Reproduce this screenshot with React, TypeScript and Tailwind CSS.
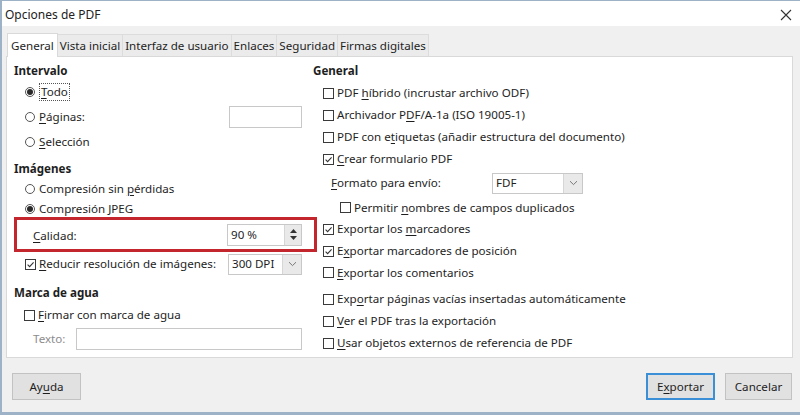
import React from "react";

const U = ({ children }: { children: React.ReactNode }) => (
  <span className="underline underline-offset-[2px] decoration-[1px]">{children}</span>
);

function Check({ checked = false }: { checked?: boolean }) {
  return (
    <span className="w-[11px] h-[11px] border border-[#3a3a3a] bg-white flex items-center justify-center shrink-0 mr-[3px]">
      {checked && (
        <svg width="9" height="9" viewBox="0 0 9 9">
          <path d="M1.6 4.6L3.6 6.6L7.6 2.3" fill="none" stroke="#333" strokeWidth="1.1" />
        </svg>
      )}
    </span>
  );
}

function Radio({ on = false }: { on?: boolean }) {
  return (
    <span className="w-[10px] h-[10px] rounded-full border border-[#555] bg-white flex items-center justify-center shrink-0 mr-[4px]">
      {on && <span className="w-[6px] h-[6px] rounded-full bg-[#2a2a2a]" />}
    </span>
  );
}

function Chevron() {
  return (
    <svg width="9" height="6" viewBox="0 0 9 6">
      <path d="M1 1.2L4.5 4.6L8 1.2" fill="none" stroke="#777" strokeWidth="1" />
    </svg>
  );
}

function Select({ value, w, h }: { value: string; w: string; h: string }) {
  return (
    <div className={`${w} ${h} border border-[#c8c8c8] bg-white flex`}>
      <div className="flex-1 flex items-center pl-[3px]">{value}</div>
      <div className="w-[19px] bg-[#e9e9e9] border-l border-[#d6d6d6] flex items-center justify-center">
        <Chevron />
      </div>
    </div>
  );
}

const tabs = ["General", "Vista inicial", "Interfaz de usuario", "Enlaces", "Seguridad", "Firmas digitales"];

export default function App() {
  return (
    <div className="w-[800px] h-[415px] bg-[#f0f0f0] border-l-2 border-t border-b-[3px] border-[#9db2c6] font-['Noto_Sans',sans-serif] text-[11.6px] text-[#1e1e1e] flex flex-col overflow-hidden leading-none">
      {/* Title bar */}
      <div className="h-[25px] bg-white flex items-center justify-between pl-[3px] pr-[8px] pt-[2px]">
        <span className="text-[12px] text-[#222]">Opciones de PDF</span>
        <svg width="12" height="12" viewBox="0 0 12 12" className="mt-[1px]">
          <path d="M1 1L11 11M11 1L1 11" stroke="#333" strokeWidth="1.1" />
        </svg>
      </div>

      {/* Tabs */}
      <div className="flex pl-[5px] mt-[6px] h-[24px] items-end">
        {tabs.map((t, i) => (
          <div
            key={t}
            className={
              i === 0
                ? "h-[24px] px-[3px] flex items-center bg-white border-t border-l border-r border-[#d9d9d9] relative z-10 -mb-px"
                : "h-[22px] px-[2px] flex items-center bg-[#ebebeb] border-t border-r border-[#dcdcdc]"
            }
          >
            {t}
          </div>
        ))}
      </div>

      {/* Panel */}
      <div className="ml-[4px] mr-[7px] h-[302px] bg-white border border-[#d9d9d9] flex">
        {/* Left column */}
        <div className="w-[303px] pl-[7px] pr-[8px] pt-[5px] flex flex-col">
          <div className="h-[18px] flex items-center font-bold">Intervalo</div>
          <div className="mt-[1px] h-[22px] flex items-center pl-[11px]">
            <Radio on />
            <span className="border border-dotted border-[#555] px-[1px] py-[2px]">
              <U>T</U>odo
            </span>
          </div>
          <div className="mt-[3px] h-[22px] flex items-center pl-[11px]">
            <Radio />
            <span className="flex-1">
              <U>P</U>áginas:
            </span>
            <div className="w-[73px] h-[22px] border border-[#c8c8c8] bg-white" />
          </div>
          <div className="mt-[3px] h-[22px] flex items-center pl-[11px]">
            <Radio />
            <span>
              <U>S</U>elección
            </span>
          </div>
          <div className="mt-[6px] h-[19px] flex items-center font-bold">Imágenes</div>
          <div className="h-[22px] flex items-center pl-[11px]">
            <Radio />
            <span>
              Compresión sin <U>p</U>érdidas
            </span>
          </div>
          <div className="h-[17px] flex items-center pl-[11px]">
            <Radio on />
            <span>Compresión JPEG</span>
          </div>
          <div className="h-[35px] w-[303px] border-[3px] border-[#c4262e] flex items-center pl-[16px] pr-[12px]">
            <span className="flex-1 pt-[2px]">
              <U>C</U>alidad:
            </span>
            <div className="w-[75px] h-[22px] border border-[#c8c8c8] bg-white flex">
              <div className="flex-1 flex items-center pl-[3px]">90 %</div>
              <div className="w-[17px] bg-[#e9e9e9] border-l border-[#d6d6d6] flex flex-col items-center justify-center gap-[3px]">
                <svg width="7" height="4" viewBox="0 0 7 4">
                  <path d="M0 4L3.5 0L7 4Z" fill="#333" />
                </svg>
                <svg width="7" height="4" viewBox="0 0 7 4">
                  <path d="M0 0L3.5 4L7 0Z" fill="#333" />
                </svg>
              </div>
            </div>
          </div>
          <div className="mt-[1px] h-[22px] flex items-center pl-[11px]">
            <Check checked />
            <span className="flex-1">
              <U>R</U>educir resolución de imágenes:
            </span>
            <Select value="300 DPI" w="w-[74px]" h="h-[21px]" />
          </div>
          <div className="mt-[9px] h-[18px] flex items-center font-bold">Marca de agua</div>
          <div className="mt-[2px] h-[22px] flex items-center pl-[10px]">
            <Check />
            <span>
              <U>F</U>irmar con marca de agua
            </span>
          </div>
          <div className="mt-[2px] h-[22px] flex items-center pl-[19px]">
            <span className="flex-1 text-[#8c8c8c]">Texto:</span>
            <div className="w-[226px] h-[22px] border border-[#c8c8c8] bg-white" />
          </div>
        </div>

        {/* Right column */}
        <div className="flex-1 pl-[3px] pt-[5px] flex flex-col">
          <div className="h-[18px] flex items-center font-bold">General</div>
          <div className="pl-[10px] flex flex-col">
            <div className="mt-[2px] h-[22px] flex items-center">
              <Check />
              <span>
                PDF <U>h</U>íbrido (incrustar archivo ODF)
              </span>
            </div>
            <div className="h-[22px] flex items-center">
              <Check />
              <span>
                Archivador P<U>D</U>F/A-1a (ISO 19005-1)
              </span>
            </div>
            <div className="h-[22px] flex items-center">
              <Check />
              <span>
                PDF con e<U>t</U>iquetas (añadir estructura del documento)
              </span>
            </div>
            <div className="h-[22px] flex items-center">
              <Check checked />
              <span>
                <U>C</U>rear formulario PDF
              </span>
            </div>
            <div className="mt-[2px] h-[22px] flex items-center pl-[8px]">
              <span className="w-[161px]">
                <U>F</U>ormato para envío:
              </span>
              <Select value="FDF" w="w-[91px]" h="h-[21px]" />
            </div>
            <div className="mt-[3px] h-[21px] flex items-center pl-[17px]">
              <Check />
              <span>
                Permitir <U>n</U>ombres de campos duplicados
              </span>
            </div>
            <div className="h-[22px] flex items-center">
              <Check checked />
              <span>
                Exportar los <U>m</U>arcadores
              </span>
            </div>
            <div className="h-[22px] flex items-center">
              <Check checked />
              <span>
                E<U>x</U>portar marcadores de posición
              </span>
            </div>
            <div className="h-[21px] flex items-center">
              <Check />
              <span>
                <U>E</U>xportar los comentarios
              </span>
            </div>
            <div className="mt-[5px] h-[22px] flex items-center">
              <Check />
              <span>
                Exp<U>o</U>rtar páginas vacías insertadas automáticamente
              </span>
            </div>
            <div className="h-[22px] flex items-center">
              <Check />
              <span>
                <U>V</U>er el PDF tras la exportación
              </span>
            </div>
            <div className="h-[22px] flex items-center">
              <Check />
              <span>
                <U>U</U>sar objetos externos de referencia de PDF
              </span>
            </div>
          </div>
        </div>
      </div>

      {/* Buttons */}
      <div className="mt-[15px] flex items-center pl-[10px] pr-[8px]">
        <button className="w-[69px] h-[27px] bg-[#e1e1e1] border border-[#c2c2c2] flex items-center justify-center">
          Ay<U>u</U>da
        </button>
        <div className="flex-1" />
        <button className="w-[69px] h-[27px] bg-[#e1e1e1] border-2 border-[#3a8fd6] flex items-center justify-center">
          E<U>x</U>portar
        </button>
        <button className="ml-[10px] w-[67px] h-[27px] bg-[#e1e1e1] border border-[#c2c2c2] flex items-center justify-center">
          Cancelar
        </button>
      </div>
    </div>
  );
}
